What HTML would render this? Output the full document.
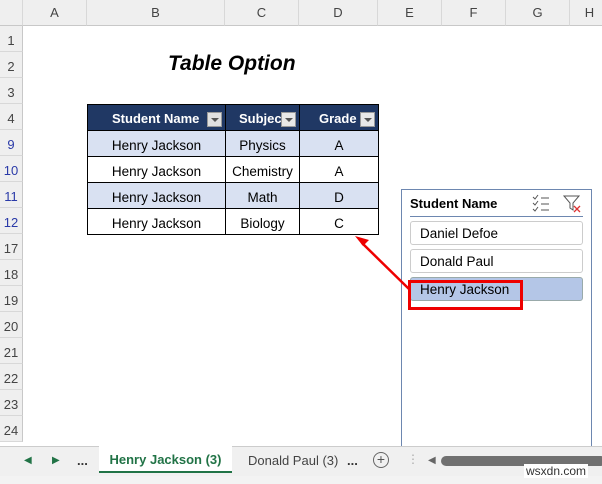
<!DOCTYPE html>
<html><head><meta charset="utf-8"><style>
*{margin:0;padding:0;box-sizing:border-box}
body{width:602px;height:484px;overflow:hidden;background:#fff;font-family:"Liberation Sans",Calibri,sans-serif;position:relative}
.abs{position:absolute}
.colh{position:absolute;top:0;height:26px;background:#efefef;border-bottom:1px solid #c8c8c8;border-right:1px solid #d8d8d8;color:#444;font-size:13px;text-align:center;line-height:26px}
.rowh{position:absolute;left:0;width:23px;height:26px;background:#efefef;border-bottom:1px solid #d8d8d8;border-right:1px solid #c8c8c8;color:#444;font-size:13px;text-align:center;line-height:30px}
.blue{color:#2a3aa8}
table{position:absolute;left:87px;top:104px;border-collapse:collapse;font-size:13.5px}
td{height:26px;border:1px solid #000;text-align:center;padding:4px 0 0 0}
th{height:26px;background:#203864;color:#fff;border:1px solid #000;font-size:13px;font-weight:bold;position:relative;padding-top:2px}
.dd{position:absolute;right:3px;top:7px;width:15px;height:15px;background:#e8e8e8;border:1px solid #999}
.dd:after{content:"";position:absolute;left:3px;top:5px;border-left:4px solid transparent;border-right:4px solid transparent;border-top:4px solid #555}
.band td{background:#d9e1f2}
.btn{position:absolute;left:410px;width:173px;height:24px;border:1px solid #ccc;border-radius:3px;font-size:13.5px;line-height:23px;padding-left:9px;color:#000}
</style></head><body>
<div class="colh" style="left:0;width:23px"></div>
<div class="colh" style="left:23px;width:64px">A</div>
<div class="colh" style="left:87px;width:138px">B</div>
<div class="colh" style="left:225px;width:74px">C</div>
<div class="colh" style="left:299px;width:79px">D</div>
<div class="colh" style="left:378px;width:64px">E</div>
<div class="colh" style="left:442px;width:64px">F</div>
<div class="colh" style="left:506px;width:64px">G</div>
<div class="colh" style="left:570px;width:40px">H</div>

<div class="rowh" style="top:26px">1</div>
<div class="rowh" style="top:52px">2</div>
<div class="rowh" style="top:78px">3</div>
<div class="rowh" style="top:104px">4</div>
<div class="rowh blue" style="top:130px">9</div>
<div class="rowh blue" style="top:156px">10</div>
<div class="rowh blue" style="top:182px">11</div>
<div class="rowh blue" style="top:208px">12</div>
<div class="rowh" style="top:234px">17</div>
<div class="rowh" style="top:260px">18</div>
<div class="rowh" style="top:286px">19</div>
<div class="rowh" style="top:312px">20</div>
<div class="rowh" style="top:338px">21</div>
<div class="rowh" style="top:364px">22</div>
<div class="rowh" style="top:390px">23</div>
<div class="rowh" style="top:416px">24</div>

<div class="abs" style="left:168px;top:52px;font-size:21px;font-weight:bold;font-style:italic">Table Option</div>

<table>
<tr><th style="width:138px;text-align:left;padding-left:24px">Student Name<span class="dd" style="background:#e0e0e0"></span></th><th style="width:74px;text-align:left;padding-left:13px">Subjec<span class="dd"></span></th><th style="width:79px;text-align:left;padding-left:19px">Grade<span class="dd"></span></th></tr>
<tr class="band"><td>Henry Jackson</td><td>Physics</td><td>A</td></tr>
<tr><td>Henry Jackson</td><td>Chemistry</td><td>A</td></tr>
<tr class="band"><td>Henry Jackson</td><td>Math</td><td>D</td></tr>
<tr><td>Henry Jackson</td><td>Biology</td><td>C</td></tr>
</table>

<div class="abs" style="left:401px;top:189px;width:191px;height:260px;border:1px solid #6d87b0;background:#fff"></div>
<div class="abs" style="left:410px;top:196px;font-size:13px;font-weight:bold">Student Name</div>
<svg class="abs" style="left:530px;top:193px" width="56" height="20"><g stroke="#555" fill="none" stroke-width="1"><path d="M3 4l2 2 3-4M3 10l2 2 3-4M3 16l2 2 3-4M11 5h8M11 11h8M11 17h8"/><path d="M34 3h15l-6 7v7l-3-2v-5z"/></g><path d="M44 13l6 6M50 13l-6 6" stroke="#d33" stroke-width="1.3"/></svg>
<div class="abs" style="left:410px;top:216px;width:173px;height:1px;background:#6d87b0"></div>
<div class="btn" style="top:221px">Daniel Defoe</div>
<div class="btn" style="top:249px">Donald Paul</div>
<div class="btn" style="top:277px;background:#b4c6e7;border-color:#9aa">Henry Jackson</div>
<div class="abs" style="left:408px;top:280px;width:115px;height:30px;border:3px solid #e00"></div>
<svg class="abs" style="left:0;top:0" width="602" height="484"><line x1="409" y1="289" x2="362" y2="243" stroke="#e00" stroke-width="2.5"/><path d="M355 236l14 4-6 6z" fill="#e00"/></svg>

<div class="abs" style="left:0;top:446px;width:602px;height:30px;background:#f0f0f0;border-top:1px solid #ccc"></div>
<div class="abs" style="left:24px;top:455px;font-size:10px;color:#217346">◀</div>
<div class="abs" style="left:52px;top:455px;font-size:10px;color:#217346">▶</div>
<div class="abs" style="left:77px;top:453px;font-size:13px;font-weight:bold;color:#333">...</div>
<div class="abs" style="left:99px;top:446px;width:133px;height:27px;background:#fff;border-bottom:2px solid #217346;font-size:13px;font-weight:bold;color:#217346;text-align:center;line-height:28px">Henry Jackson (3)</div>
<div class="abs" style="left:248px;top:453px;font-size:13px;color:#444">Donald Paul (3)</div>
<div class="abs" style="left:347px;top:453px;font-size:13px;font-weight:bold;color:#333">...</div>
<div class="abs" style="left:373px;top:452px;width:16px;height:16px;border:1px solid #666;border-radius:50%;font-size:14px;line-height:13px;text-align:center;color:#555">+</div>
<div class="abs" style="left:407px;top:452px;font-size:12px;color:#aaa">⋮</div>
<div class="abs" style="left:428px;top:455px;font-size:10px;color:#666">◀</div>
<div class="abs" style="left:441px;top:456px;width:165px;height:10px;background:#707070;border-radius:5px"></div>
<div class="abs" style="left:0;top:476px;width:602px;height:8px;background:#f3f3f3"></div>
<div class="abs" style="left:524px;top:464px;font-size:12px;color:#333;background:#fff;padding:0 2px">wsxdn.com</div>
</body></html>
